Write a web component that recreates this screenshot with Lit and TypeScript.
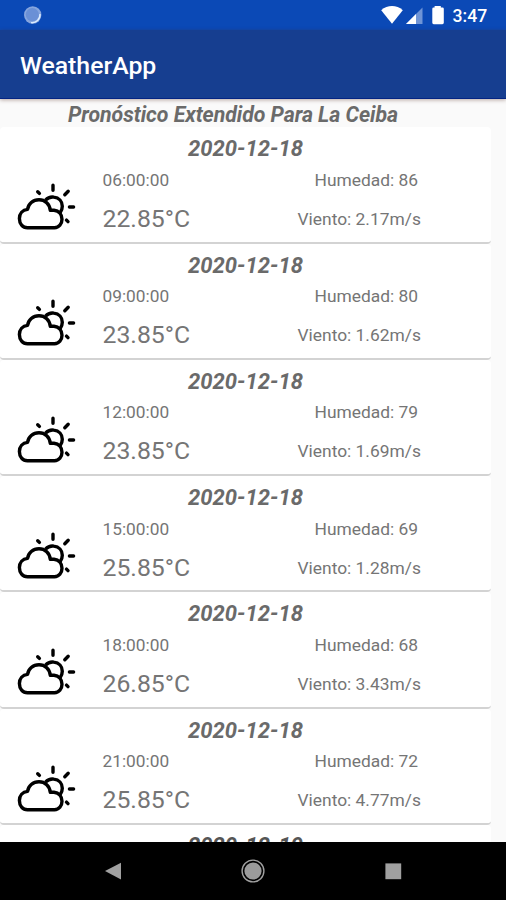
import { LitElement, html, css } from "lit";
import { customElement, property } from "lit/decorators.js";

interface Forecast {
  date: string;
  time: string;
  temp: string;
  humidity: string;
  wind: string;
}

const forecasts: Forecast[] = [
  { date: "2020-12-18", time: "06:00:00", temp: "22.85", humidity: "86", wind: "2.17" },
  { date: "2020-12-18", time: "09:00:00", temp: "23.85", humidity: "80", wind: "1.62" },
  { date: "2020-12-18", time: "12:00:00", temp: "23.85", humidity: "79", wind: "1.69" },
  { date: "2020-12-18", time: "15:00:00", temp: "25.85", humidity: "69", wind: "1.28" },
  { date: "2020-12-18", time: "18:00:00", temp: "26.85", humidity: "68", wind: "3.43" },
  { date: "2020-12-18", time: "21:00:00", temp: "25.85", humidity: "72", wind: "4.77" },
];

const nextDate = "2020-12-19";

@customElement("status-bar")
class StatusBar extends LitElement {
  static styles = css`
    :host {
      display: flex;
      align-items: center;
      box-sizing: border-box;
      height: 30px;
      background: #0b49b6;
      color: #fff;
    }
    svg {
      display: block;
      flex: none;
    }
    .sync {
      margin-left: 23px;
    }
    .icons {
      margin-left: auto;
    }
    .clock {
      width: 36px;
      margin: 2px 17.5px 0 7.5px;
      font-size: 17.6px;
      font-weight: 500;
      line-height: 20px;
      white-space: nowrap;
    }
  `;
  render() {
    return html`
      <svg class="sync" width="20" height="30" viewBox="0 0 20 30">
        <circle cx="9.7" cy="15" r="8.7" fill="#86a5de" />
        <circle cx="9.3" cy="14.6" r="6.6" fill="#6a90d6" />
        <path d="M17 14A8 8 0 0 1 8 22.6" fill="none" stroke="#dcecff" stroke-width="1.4" />
      </svg>
      <svg class="icons" width="64" height="30" viewBox="381 0 64 30" fill="#fff">
        <path d="M381.2 10.2C387.5 4.6 396.6 4.6 402.8 10.2L392 23.8z" />
        <path d="M422.5 7.5V24H406z" fill="#6f94d6" />
        <path d="M416 14V24H406z" />
        <path d="M434.6 7.4V6h6.2v1.4h1.6q1.4 0 1.4 1.4v14q0 1.4-1.4 1.4h-8.7q-1.4 0-1.4-1.4v-14q0-1.4 1.4-1.4z" />
      </svg>
      <span class="clock">3:47</span>
    `;
  }
}

@customElement("forecast-card")
class ForecastCard extends LitElement {
  @property({ attribute: false }) data!: Forecast;

  static styles = css`
    :host {
      display: grid;
      grid-template-columns: 102.5px 146px 1fr;
      grid-template-rows: 33.1px 39px 39px;
      align-items: center;
      align-content: start;
      box-sizing: border-box;
      flex: none;
      width: 491px;
      height: 116.3px;
      border-bottom: 2px solid #d3d3d3;
      border-radius: 4px;
      background: #fff;
      color: #757575;
      font-size: 17.3px;
      line-height: 24px;
      white-space: nowrap;
    }
    .date {
      grid-column: 1 / -1;
      align-self: start;
      text-align: center;
      margin-top: 10px;
      font-size: 22px;
      font-weight: 700;
      font-style: italic;
      color: #6a6a6a;
    }
    .icon {
      grid-column: 1;
      grid-row: 2 / 4;
      display: block;
      margin: 17.4px 0 0 16px;
    }
    .time,
    .humidity {
      align-self: center;
    }
    .time {
      grid-column: 2;
    }
    .temp {
      grid-column: 2;
      font-size: 24.8px;
    }
    .humidity,
    .wind {
      grid-column: 3;
      justify-self: start;
      font-size: 17.4px;
    }
    .humidity {
      margin-left: 66px;
    }
    .wind {
      margin-left: 49px;
    }
  `;
  render() {
    const d = this.data;
    return html`
      <div class="date">${d.date}</div>
      <svg class="icon" width="62" height="50" viewBox="16 183 62 50" fill="none" stroke="#000" stroke-width="3.4" stroke-linejoin="round">
        <path d="M27.5 227.7H54.5C59 227.7 62 223.8 62 219.3C62 214.5 58.8 210.8 54 210.3H50.3C49.8 204 45 199.7 39 199.7C33 199.7 28.2 203.8 27.6 209.4C22.5 209.8 19.4 213.8 19.4 218.6C19.4 223.8 22.6 227.7 27.5 227.7z" />
        <path d="M45.5 200.2C48 197.5 51 196.7 53.8 197.1C59 197.6 62.3 201.4 62.3 206.2C62.3 209 61.4 211.1 60 212.8" />
        <path stroke-linecap="round" stroke-width="3.4" d="M53 185.2V190.2M64.8 194.8L68.2 191.3M69.4 207H73.6M66.5 220.1L68 221.6M37.7 191.7L39.4 193.4" />
      </svg>
      <div class="time">${d.time}</div>
      <div class="humidity">Humedad: ${d.humidity}</div>
      <div class="temp">${d.temp}°C</div>
      <div class="wind">Viento: ${d.wind}m/s</div>
    `;
  }
}

@customElement("nav-bar")
class NavBar extends LitElement {
  static styles = css`
    :host {
      display: flex;
      justify-content: center;
      align-items: center;
      gap: 116px;
      box-sizing: border-box;
      height: 58px;
      background: #000;
    }
    svg {
      display: block;
    }
  `;
  render() {
    return html`
      <svg width="24" height="24" viewBox="0 0 24 24"><path d="M4 12L20 3.8V20.4z" fill="#a0a0a0" /></svg>
      <svg width="24" height="24" viewBox="0 0 24 24">
        <circle cx="12" cy="12" r="8.6" fill="#9b9b9b" />
        <circle cx="12" cy="12" r="10.9" fill="none" stroke="#a0a0a0" stroke-width="1.4" />
      </svg>
      <svg width="24" height="24" viewBox="0 0 24 24"><rect x="4.4" y="4.4" width="15.8" height="15.8" fill="#a0a0a0" /></svg>
    `;
  }
}

@customElement("app-root")
class AppRoot extends LitElement {
  static styles = css`
    :host {
      display: flex;
      flex-direction: column;
      width: 506px;
      height: 900px;
      overflow: hidden;
      background: #fafafa;
      font-family: Roboto, sans-serif;
    }
    .toolbar {
      display: flex;
      align-items: center;
      flex: none;
      box-sizing: border-box;
      height: 69px;
      padding: 2px 20px 0;
      border-bottom: 1px solid #042483;
      background: #163e90;
      box-shadow: 0 1px 4px rgba(80, 40, 30, 0.4);
      color: #fff;
      font-size: 24.8px;
      font-weight: 500;
    }
    .heading {
      flex: none;
      height: 28.3px;
      padding-left: 68px;
      box-sizing: border-box;
      padding-top: 2px;
      color: #6a6a6a;
      font-size: 21.3px;
      letter-spacing: -0.05px;
      line-height: 27px;
      font-weight: 700;
      font-style: italic;
      white-space: nowrap;
    }
    .list {
      display: flex;
      flex-direction: column;
      flex: 1;
      min-height: 0;
      overflow: hidden;
    }
    .next {
      flex: none;
      box-sizing: border-box;
      width: 491px;
      height: 40px;
      padding-top: 9.2px;
      border-radius: 4px;
      background: #fff;
      color: #555;
      font-size: 22px;
      line-height: 24px;
      font-weight: 700;
      font-style: italic;
      text-align: center;
    }
    status-bar,
    nav-bar {
      flex: none;
    }
  `;
  render() {
    return html`
      <status-bar></status-bar>
      <div class="toolbar">WeatherApp</div>
      <div class="heading">Pronóstico Extendido Para La Ceiba</div>
      <div class="list">
        ${forecasts.map((f) => html`<forecast-card .data=${f}></forecast-card>`)}
        <div class="next">${nextDate}</div>
      </div>
      <nav-bar></nav-bar>
    `;
  }
}
